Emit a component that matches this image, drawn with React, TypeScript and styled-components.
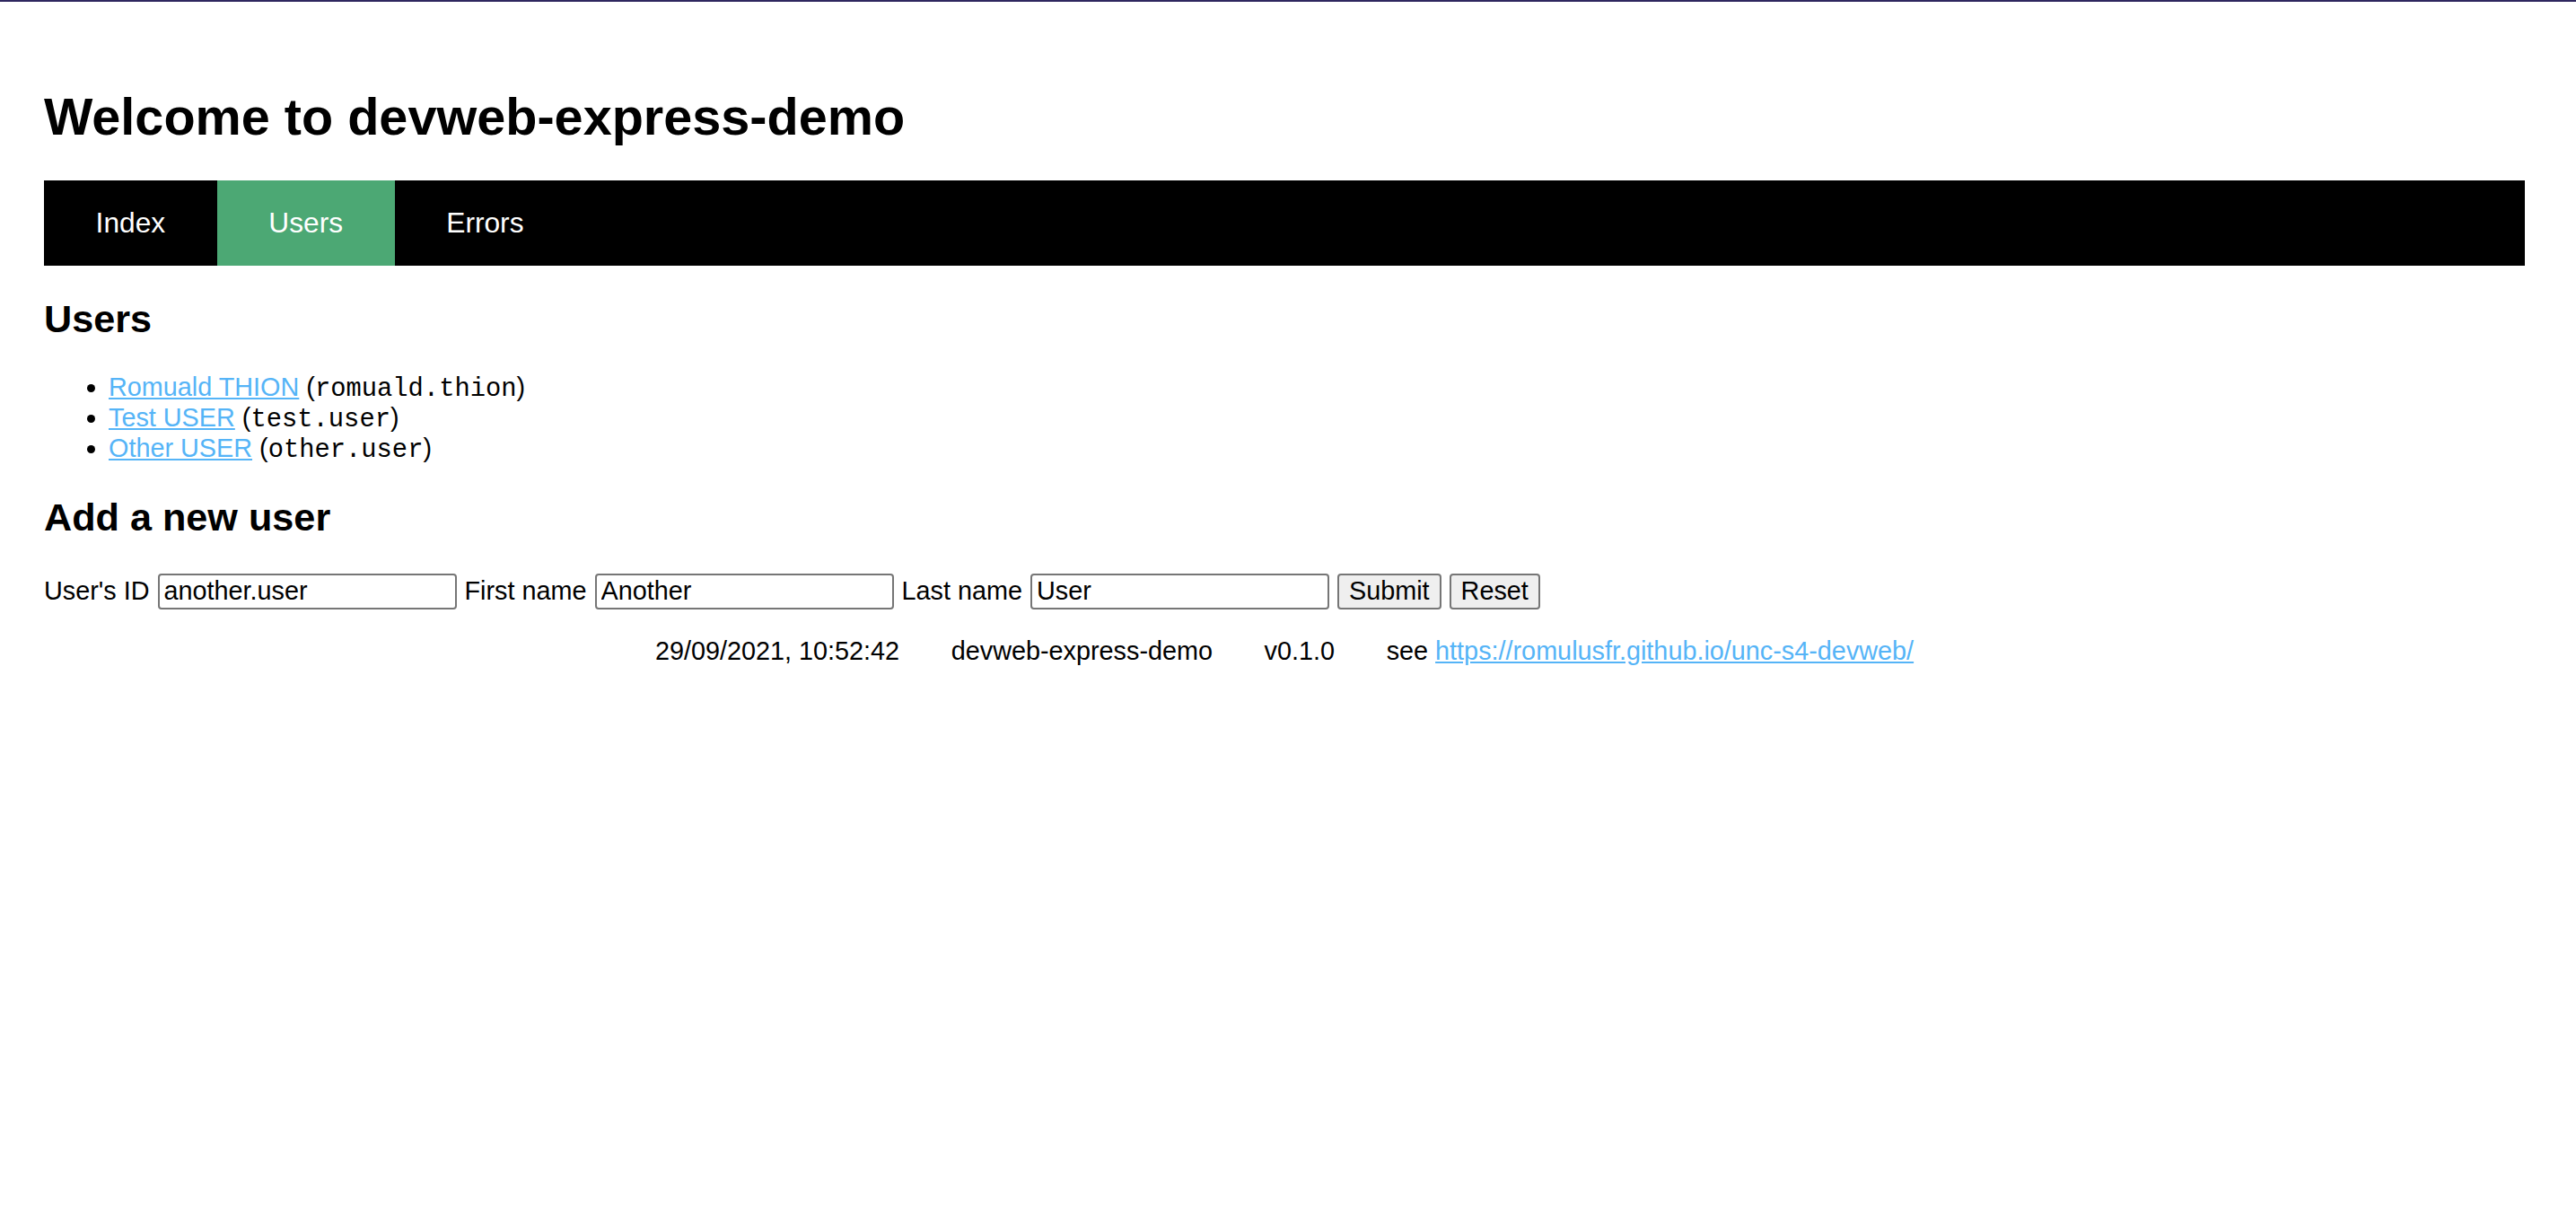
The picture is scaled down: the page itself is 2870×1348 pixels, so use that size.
/**
 * App.tsx
 * Users page of devweb-express-demo
 */

// Node Modules
import { FC } from "react";
import styled, { createGlobalStyle } from "styled-components";

// Data
const users = [
  { name: "Romuald THION", login: "romuald.thion" },
  { name: "Test USER", login: "test.user" },
  { name: "Other USER", login: "other.user" },
];

const navItems = ["Index", "Users", "Errors"];

// Styled Components
const GlobalStyle = createGlobalStyle`
  html, body {
    margin: 0;
    background: #ffffff;
  }
  body {
    border-top: 2px solid #2e275f;
    font-family: "Liberation Sans", Arial, Helvetica, sans-serif;
    font-size: 28.8px;
    color: #000000;
  }
`;

const Page = styled.main`
  padding: 56px 57px 0 49px;
`;

const Title = styled.h1`
  font-size: 57.6px;
  font-weight: bold;
  margin: 38.6px 0;
  line-height: normal;
`;

const NavBar = styled.nav`
  display: flex;
  background: #000000;
`;

const NavLink = styled.a<{ $active?: boolean }>`
  display: block;
  padding: 28.8px 57.6px;
  font-size: 31.7px;
  line-height: normal;
  color: #ffffff;
  text-decoration: none;
  background: ${(p) => (p.$active ? "#4ca874" : "transparent")};
`;

const SectionTitle = styled.h2`
  font-size: 43.2px;
  font-weight: bold;
  margin: 35px 0;
  line-height: normal;
`;

const UserList = styled.ul`
  margin: 28.8px 0 28px;
  padding-left: 72px;
`;

const UserItem = styled.li`
  line-height: 33.9px;
`;

const UserLink = styled.a`
  color: #55b4f7;
  text-decoration: underline;
`;

const Login = styled.code`
  font-family: "Liberation Mono", "Courier New", monospace;
  font-size: 28.8px;
  line-height: 1;
`;

const FormRow = styled.form`
  display: flex;
  align-items: center;
  gap: 9px;
  margin: 38px 0 0;
`;

const Label = styled.label`
  line-height: normal;
`;

const TextInput = styled.input`
  box-sizing: border-box;
  width: 333px;
  height: 40px;
  padding: 0 5px;
  border: 2px solid #767676;
  border-radius: 4px;
  font-family: inherit;
  font-size: 28.8px;
  color: #000000;
  background: #ffffff;
`;

const Button = styled.button`
  box-sizing: border-box;
  height: 40px;
  padding: 0 11px;
  border: 2px solid #767676;
  border-radius: 4px;
  background: #efefef;
  font-family: inherit;
  font-size: 28.8px;
  color: #000000;
`;

const Footer = styled.footer`
  display: flex;
  justify-content: center;
  gap: 57.6px;
  margin-top: 30px;
  line-height: normal;
`;

const FooterLink = styled.a`
  color: #55b4f7;
  text-decoration: underline;
`;

const App: FC = () => {
  return (
    <>
      <GlobalStyle />
      <Page>
        <Title>Welcome to devweb-express-demo</Title>
        <NavBar>
          {navItems.map((item) => (
            <NavLink key={item} href="#" $active={item === "Users"}>
              {item}
            </NavLink>
          ))}
        </NavBar>

        <SectionTitle>Users</SectionTitle>
        <UserList>
          {users.map((user) => (
            <UserItem key={user.login}>
              <UserLink href="#">{user.name}</UserLink> (<Login>{user.login}</Login>)
            </UserItem>
          ))}
        </UserList>

        <SectionTitle>Add a new user</SectionTitle>
        <FormRow onSubmit={(e) => e.preventDefault()}>
          <Label htmlFor="login">User's ID</Label>
          <TextInput id="login" defaultValue="another.user" />
          <Label htmlFor="first">First name</Label>
          <TextInput id="first" defaultValue="Another" />
          <Label htmlFor="last">Last name</Label>
          <TextInput id="last" defaultValue="User" />
          <Button type="submit">Submit</Button>
          <Button type="reset">Reset</Button>
        </FormRow>

        <Footer>
          <span>29/09/2021, 10:52:42</span>
          <span>devweb-express-demo</span>
          <span>v0.1.0</span>
          <span>
            see <FooterLink href="#">https://romulusfr.github.io/unc-s4-devweb/</FooterLink>
          </span>
        </Footer>
      </Page>
    </>
  );
};

export default App;
